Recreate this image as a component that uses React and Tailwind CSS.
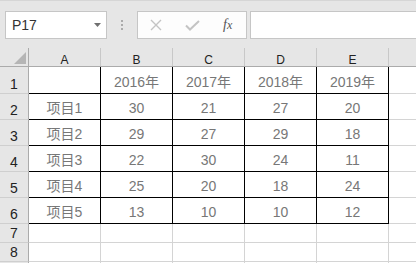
import React from 'react';

const COLS = ['A', 'B', 'C', 'D', 'E'];

const DATA = [
    ['', '2016年', '2017年', '2018年', '2019年'],
    ['项目1', '30', '21', '27', '20'],
    ['项目2', '29', '27', '29', '18'],
    ['项目3', '22', '30', '24', '11'],
    ['项目4', '25', '20', '18', '24'],
    ['项目5', '13', '10', '10', '12'],
];

const ROW_HEIGHTS = ['h-[27px]', 'h-[26px]', 'h-[26px]', 'h-[26px]', 'h-[26px]', 'h-[26px]'];

const Toolbar = () => (
    <div className="h-[48px] bg-[#e6e6e6] border-t border-[#d6d6d6] flex items-start pt-[10px] pl-[5px] overflow-hidden">
        <div className="w-[102px] shrink-0 h-[28px] bg-white border border-[#c6c6c6] flex items-center pl-[6px] pr-[5px] justify-between">
            <span className="text-[14px] text-[#333] leading-none">P17</span>
            <svg width="7" height="4" viewBox="0 0 7 4">
                <polygon points="0,0 7,0 3.5,4" fill="#707070" />
            </svg>
        </div>
        <div className="ml-[14px] mt-[9px] shrink-0 flex flex-col gap-[2px]">
            <div className="w-[2px] h-[2px] bg-[#ababab]" />
            <div className="w-[2px] h-[2px] bg-[#ababab]" />
            <div className="w-[2px] h-[2px] bg-[#ababab]" />
        </div>
        <div className="ml-[14px] w-[110px] shrink-0 h-[28px] bg-[#fdfdfd] border border-[#c6c6c6] flex items-center">
            <svg className="ml-[12px]" width="12" height="12" viewBox="0 0 12 12">
                <path d="M1 1 L11 11 M11 1 L1 11" stroke="#c4c4c4" strokeWidth="1.4" fill="none" />
            </svg>
            <svg className="ml-[23px]" width="15" height="11" viewBox="0 0 15 11">
                <path d="M1 5.5 L5 9.5 L14 1" stroke="#c4c4c4" strokeWidth="2" fill="none" />
            </svg>
            <span className="ml-[23px] text-[14px] italic text-[#555] leading-none" style={{ fontFamily: '"Liberation Serif", serif' }}>
                f<span className="text-[12px]">x</span>
            </span>
        </div>
        <div className="ml-[3px] w-[200px] shrink-0 h-[28px] bg-white border border-[#c6c6c6]" />
    </div>
);

const HeaderRow = () => (
    <div className="flex h-[19px] bg-[#e6e6e6] border-b border-[#ababab]">
        <div className="w-[29px] shrink-0 border-r border-[#ababab] flex items-end justify-end pr-[2px] pb-[2px]">
            <svg width="12" height="12" viewBox="0 0 12 12">
                <polygon points="12,0 12,12 0,12" fill="#b5b5b5" />
            </svg>
        </div>
        {COLS.map((c) => (
            <div key={c} className="w-[72px] shrink-0 border-r border-[#c8c8c8] flex items-end justify-center text-[12px] leading-none text-[#222]">
                {c}
            </div>
        ))}
        <div className="flex-1" />
    </div>
);

const RowNum = ({ n }) => (
    <div className="w-[29px] shrink-0 bg-[#e6e6e6] border-r border-[#ababab] border-b border-b-[#cfcfcf] flex items-end justify-center pb-[2px] text-[14px] leading-none text-[#222]">
        {n}
    </div>
);

const App = () => {
    return (
        <div
            className="w-[416px] h-[263px] overflow-hidden bg-white"
            style={{ fontFamily: '"Liberation Sans", "Noto Sans CJK SC", sans-serif' }}
        >
            <Toolbar />
            <HeaderRow />

            {DATA.map((row, i) => (
                <div key={i} className={`flex ${ROW_HEIGHTS[i]}`}>
                    <RowNum n={i + 1} />
                    {row.map((val, j) => (
                        <div
                            key={j}
                            className="w-[72px] shrink-0 border-r border-b border-black flex items-end justify-center pb-[4px] text-[14px] leading-none text-[#777]"
                        >
                            {val}
                        </div>
                    ))}
                    <div className="flex-1 border-b border-[#d4d4d4]" />
                </div>
            ))}

            {/* row 9 only peeks in at the bottom edge, so no number */}
            {['7', '8', ''].map((n, i) => (
                <div key={i} className="flex h-[19px]">
                    <RowNum n={n} />
                    {COLS.map((c) => (
                        <div key={c} className="w-[72px] shrink-0 border-r border-b border-[#d4d4d4]" />
                    ))}
                    <div className="flex-1 border-b border-[#d4d4d4]" />
                </div>
            ))}
        </div>
    );
};

export default App;
